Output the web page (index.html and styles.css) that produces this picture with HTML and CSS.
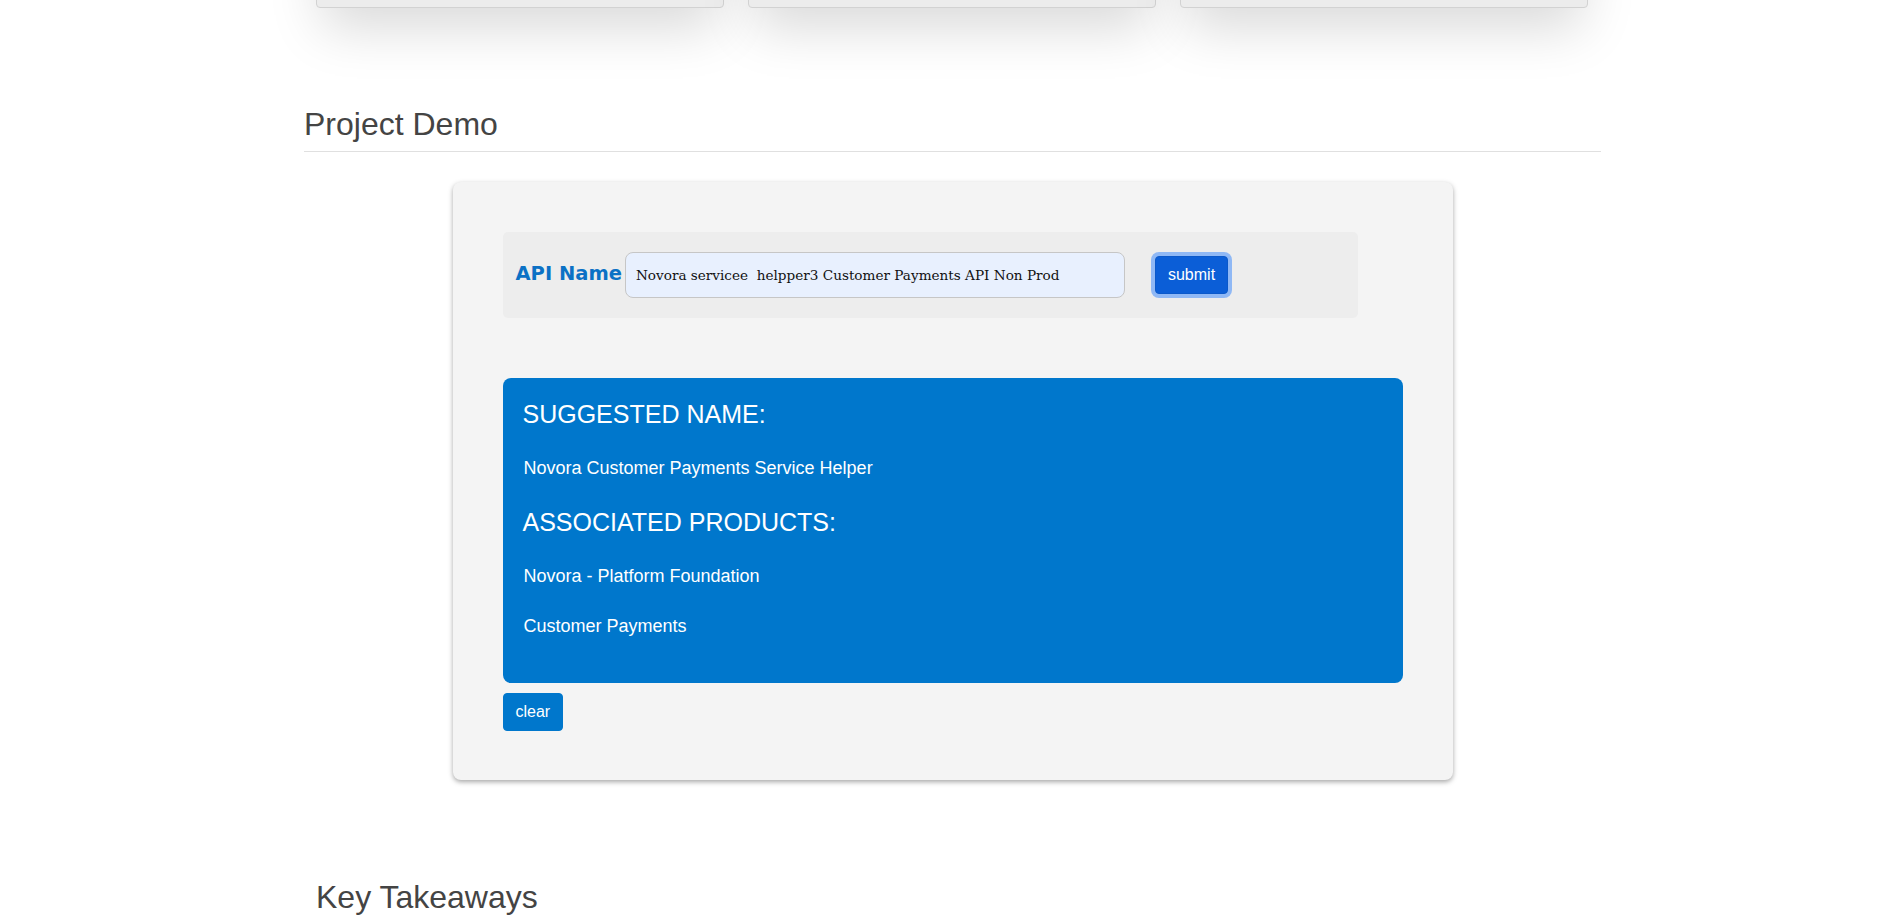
FILE: index.html
```html
<!DOCTYPE html>
<html lang="en">
<head>
<meta charset="utf-8">
<title>Project Demo</title>
<link rel="stylesheet" href="styles.css">
</head>
<body>
<div class="page">
  <div class="feature-row">
    <div class="feature-card"></div>
    <div class="feature-card"></div>
    <div class="feature-card"></div>
  </div>

  <h2 class="section-title">Project Demo</h2>

  <div class="demo-card">
    <form class="api-form">
      <label class="api-label" for="apiName">API Name</label>
      <input class="api-input" id="apiName" type="text" value="Novora servicee  helpper3 Customer Payments API Non Prod">
      <button class="btn btn-submit" type="button">submit</button>
    </form>

    <div class="result-box">
      <h3 class="result-heading">SUGGESTED NAME:</h3>
      <p class="result-item">Novora Customer Payments Service Helper</p>
      <h3 class="result-heading">ASSOCIATED PRODUCTS:</h3>
      <p class="result-item">Novora - Platform Foundation</p>
      <p class="result-item">Customer Payments</p>
    </div>

    <button class="btn btn-clear" type="button">clear</button>
  </div>

  <h2 class="section-subtitle">Key Takeaways</h2>
</div>
</body>
</html>
```

FILE: styles.css
```css
html, body {
  margin: 0;
  padding: 0;
  background: #ffffff;
  overflow: hidden;
}

body {
  font-family: "Liberation Sans", Arial, sans-serif;
  color: #444444;
}

.page {
  width: 1297px;
  margin-left: 304px;
}

.feature-row {
  display: grid;
  grid-template-columns: repeat(3, 408px);
  gap: 24px;
  padding: 0 12px;
  margin-top: -292px;
}

.feature-card {
  height: 298px;
  background: #ececec;
  border: 1px solid #d2d2d2;
  border-radius: 4px;
  box-shadow: 0 26px 50px -6px rgba(0, 0, 0, 0.15);
}

.section-title {
  margin: 98px 0 0;
  padding-bottom: 8px;
  border-bottom: 1px solid #e0e0e0;
  font-size: 32px;
  font-weight: 400;
  color: #444444;
}

.demo-card {
  width: 1000px;
  box-sizing: border-box;
  margin: 30px auto 0;
  padding: 50px 50px 49px;
  background: #f4f4f4;
  border-radius: 8px;
  box-shadow: 0 2px 5px rgba(0, 0, 0, 0.35);
}

.api-form {
  display: flex;
  align-items: center;
  width: 95%;
  box-sizing: border-box;
  margin: 0;
  padding: 20px 13px;
  background: #ededed;
  border-radius: 5px;
}

.api-label {
  font-family: "DejaVu Sans", sans-serif;
  font-weight: 700;
  font-size: 19.5px;
  color: #0b71c5;
  margin-right: 3px;
  margin-bottom: 4px;
}

.api-input {
  width: 500px;
  height: 46px;
  box-sizing: border-box;
  padding: 0 10px;
  border: 1px solid #c6c6c6;
  border-radius: 8px;
  background: #e8f0fe;
  font-family: "DejaVu Serif", serif;
  font-size: 13.6px;
  color: #111111;
  outline: none;
}

.btn {
  font-family: "Liberation Sans", Arial, sans-serif;
  font-size: 16px;
  line-height: 24px;
  color: #ffffff;
  border: 1px solid transparent;
  border-radius: 4px;
  padding: 6px 12px;
  cursor: pointer;
}

.btn-submit {
  margin-left: 30px;
  background: #0b5ed7;
  border-color: #0a58ca;
  box-shadow: 0 0 0 4px rgba(49, 132, 253, 0.5);
}

.result-box {
  display: flex;
  flex-direction: column;
  gap: 29px;
  margin-top: 60px;
  padding: 22px 20px 46px;
  background: #0077cc;
  border-radius: 8px;
  color: #ffffff;
}

.result-heading {
  margin: 0;
  font-size: 25px;
  font-weight: 400;
}

.result-item {
  margin: 0;
  padding-left: 1px;
  font-size: 18px;
}

.btn-clear {
  display: block;
  margin-top: 10px;
  background: #0077cc;
  border-color: #0077cc;
}

.section-subtitle {
  margin: 99px 0 0;
  padding-left: 12px;
  font-size: 32px;
  font-weight: 400;
  color: #444444;
}
```
